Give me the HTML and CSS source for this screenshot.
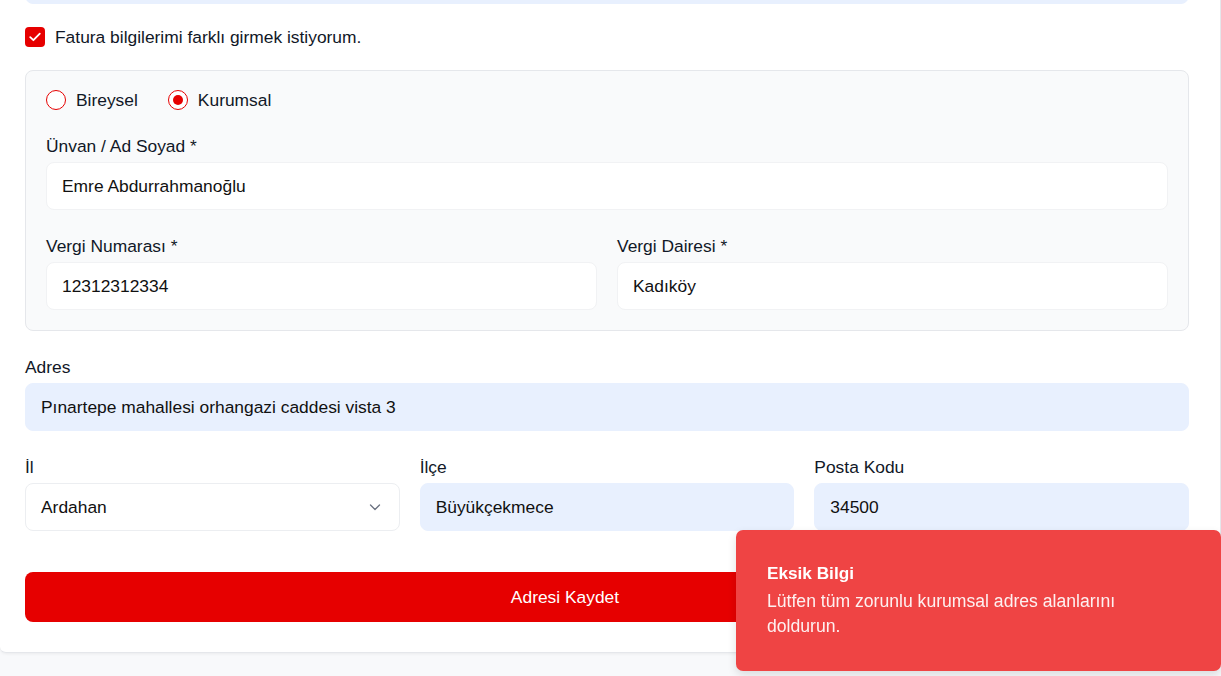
FILE: index.html
```html
<!DOCTYPE html>
<html lang="tr">
<head>
<meta charset="utf-8">
<title>Adres</title>
<link rel="stylesheet" href="styles.css">
</head>
<body>
<div class="card">
  <div class="input autofill top-input"></div>

  <label class="check-row">
    <span class="checkbox">
      <svg width="20" height="20" viewBox="0 0 20 20"><path d="M5.2 10.2 L8.4 13.2 L14.8 6.6" fill="none" stroke="#fff" stroke-width="1.8" stroke-linecap="round" stroke-linejoin="round"/></svg>
    </span>
    <span>Fatura bilgilerimi farklı girmek istiyorum.</span>
  </label>

  <div class="panel">
    <div class="radio-row">
      <label class="radio-opt"><span class="radio"></span><span>Bireysel</span></label>
      <label class="radio-opt"><span class="radio checked"></span><span>Kurumsal</span></label>
    </div>

    <div class="field">
      <div class="label">Ünvan / Ad Soyad *</div>
      <div class="input">Emre Abdurrahmanoğlu</div>
    </div>

    <div class="grid2">
      <div class="field-nm">
        <div class="label">Vergi Numarası *</div>
        <div class="input">12312312334</div>
      </div>
      <div class="field-nm">
        <div class="label">Vergi Dairesi *</div>
        <div class="input">Kadıköy</div>
      </div>
    </div>
  </div>

  <div class="field">
    <div class="label">Adres</div>
    <div class="input autofill">Pınartepe mahallesi orhangazi caddesi vista 3</div>
  </div>

  <div class="grid3">
    <div class="field-nm">
      <div class="label">İl</div>
      <div class="input select">
        <span>Ardahan</span>
        <svg width="16" height="16" viewBox="0 0 16 16"><path d="M3.5 6 L8 10.5 L12.5 6" fill="none" stroke="#6b7280" stroke-width="1.3" stroke-linecap="round" stroke-linejoin="round"/></svg>
      </div>
    </div>
    <div class="field-nm">
      <div class="label">İlçe</div>
      <div class="input autofill">Büyükçekmece</div>
    </div>
    <div class="field-nm">
      <div class="label">Posta Kodu</div>
      <div class="input autofill">34500</div>
    </div>
  </div>

  <button class="save-btn">Adresi Kaydet</button>
</div>

<div class="toast">
  <div class="toast-title">Eksik Bilgi</div>
  <div class="toast-desc">Lütfen tüm zorunlu kurumsal adres alanlarını doldurun.</div>
</div>
</body>
</html>
```

FILE: styles.css
```css
* { box-sizing: border-box; }
html, body { margin: 0; padding: 0; }
body {
  background: #f8f9fb;
  font-family: "Liberation Sans", Arial, sans-serif;
  font-size: 17.4px;
  color: #111827;
  height: 676px;
  overflow: hidden;
}
.card {
  background: #fff;
  border-right: 1px solid #e5e7eb;
  border-bottom: 1px solid #e5e7eb;
  border-radius: 0 0 6px 6px;
  padding: 0 31px 30px 25px;
  margin-top: -44px;
  box-shadow: 0 1px 3px rgba(0,0,0,0.06);
}
.input {
  height: 48px;
  border: 1px solid #f1f2f4;
  border-radius: 8px;
  background: #fff;
  padding: 0 15px;
  display: flex;
  align-items: center;
  color: #111;
  line-height: 20px;
}
.autofill { background: #e8f0fe; border-color: #e8f0fe; }
.check-row {
  display: flex;
  align-items: center;
  gap: 10px;
  margin-top: 23px;
  height: 20px;
  line-height: 20px;
}
.checkbox {
  width: 20px; height: 20px;
  background: #e60000;
  border-radius: 4px;
  display: flex; align-items: center; justify-content: center;
}
.panel {
  margin-top: 23px;
  background: #f9fafb;
  border: 1px solid #e5e7eb;
  border-radius: 8px;
  padding: 19px 20px 20px;
}
.radio-row {
  display: flex;
  gap: 30px;
  height: 20px;
  align-items: center;
}
.radio-opt {
  display: flex;
  align-items: center;
  gap: 10px;
  line-height: 20px;
}
.radio {
  width: 20px; height: 20px;
  border: 1.3px solid #e60000;
  border-radius: 50%;
  background: #fff;
  display: flex; align-items: center; justify-content: center;
}
.radio.checked::after {
  content: "";
  width: 10px; height: 10px;
  border-radius: 50%;
  background: #e60000;
}
.field { margin-top: 24px; }
.label {
  height: 24px;
  line-height: 24px;
  margin-bottom: 4px;
  color: #111827;
}
.grid2 {
  display: grid;
  grid-template-columns: 1fr 1fr;
  gap: 20px;
  margin-top: 24px;
}
.grid3 {
  display: grid;
  grid-template-columns: 1fr 1fr 1fr;
  gap: 20px;
  margin-top: 24px;
}
.select { justify-content: space-between; border-color: #eceef1; padding-right: 16px; }
.save-btn {
  display: block;
  width: 100%;
  height: 50px;
  margin-top: 41px;
  border: none;
  border-radius: 8px;
  background: #e60000;
  color: #fff;
  font-family: inherit;
  font-size: 17.4px;
  padding: 0 84px 0 0;
}
.toast {
  position: fixed;
  right: 0;
  bottom: 5px;
  width: 485px;
  height: 141px;
  background: #ef4444;
  border-radius: 7px;
  padding: 32px 60px 0 31px;
  color: #fff;
  box-shadow: 0 4px 10px rgba(0,0,0,0.12);
}
.toast-title {
  font-weight: bold;
  font-size: 17.2px;
  line-height: 22px;
}
.toast-desc {
  margin-top: 5px;
  font-size: 17.6px;
  line-height: 25px;
  opacity: 0.92;
}
```
